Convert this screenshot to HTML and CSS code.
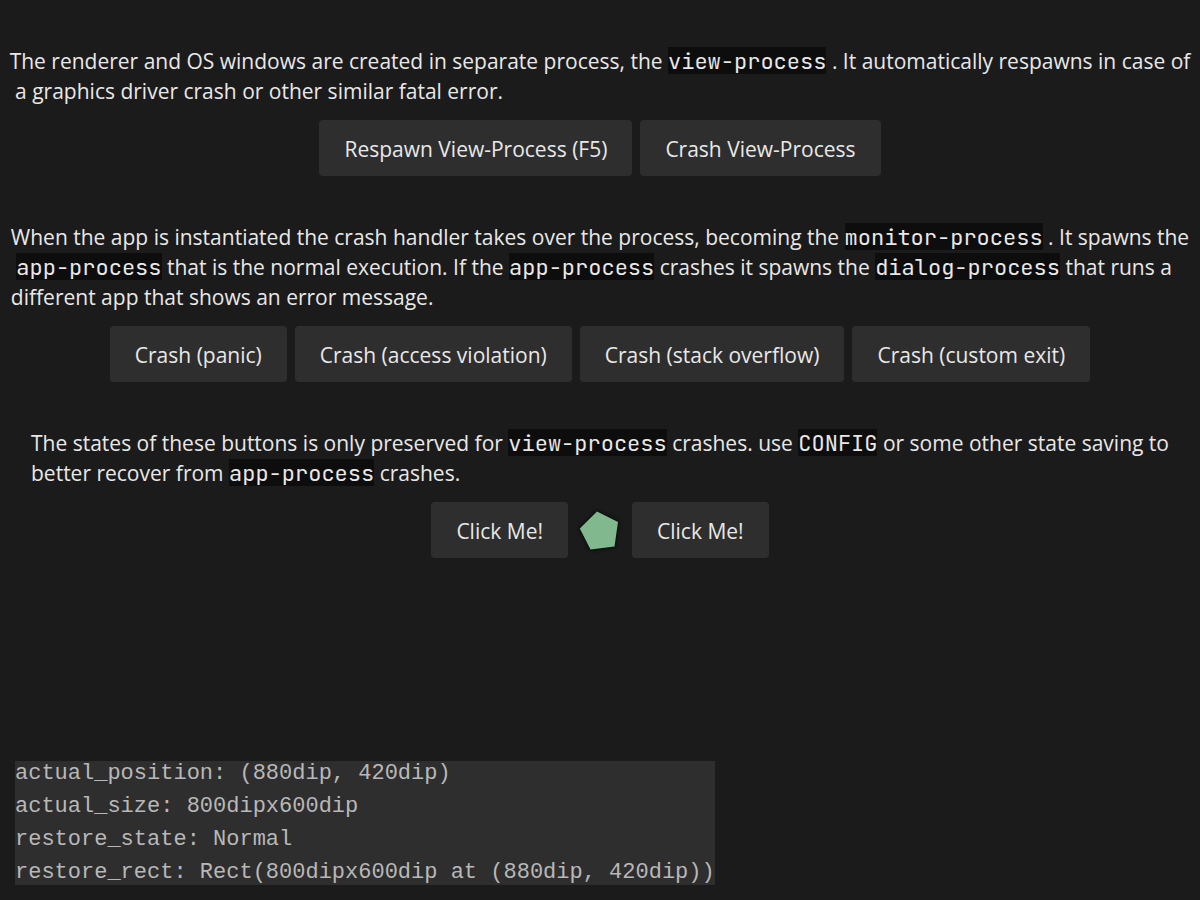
FILE: index.html
```html
<!DOCTYPE html>
<html lang="en">
<head>
<meta charset="utf-8">
<title>Respawn Example</title>
<link rel="stylesheet" href="styles.css">
</head>
<body>
<main class="content">
  <section class="group">
    <p class="text">The renderer and OS windows are created in separate process, the <code>view-process</code> . It automatically respawns in case of<br>&nbsp;a graphics driver crash or other similar fatal error.</p>
    <div class="actions">
      <button class="btn" type="button">Respawn View-Process (F5)</button>
      <button class="btn" type="button">Crash View-Process</button>
    </div>
  </section>
  <section class="group">
    <p class="text">When the app is instantiated the crash handler takes over the process, becoming the <code>monitor-process</code> . It spawns the<br>&nbsp;<code>app-process</code> that is the normal execution. If the <code>app-process</code> crashes it spawns the <code>dialog-process</code> that runs a<br>different app that shows an error message.</p>
    <div class="actions">
      <button class="btn" type="button">Crash (panic)</button>
      <button class="btn" type="button">Crash (access violation)</button>
      <button class="btn" type="button">Crash (stack overflow)</button>
      <button class="btn" type="button">Crash (custom exit)</button>
    </div>
  </section>
  <section class="group">
    <p class="text">The states of these buttons is only preserved for <code>view-process</code> crashes. use <code>CONFIG</code> or some other state saving to<br>better recover from <code>app-process</code> crashes.</p>
    <div class="actions">
      <button class="btn" type="button">Click Me!</button>
      <svg class="shape" width="48" height="48" viewBox="0 0 48 48" aria-hidden="true"><path d="M21 5.500L42 16L38.500 40.500L14.500 43.500L3.800 22.500Z"/></svg>
      <button class="btn" type="button">Click Me!</button>
    </div>
  </section>
</main>
<div class="status">
  <div>actual_position: (880dip, 420dip)</div>
  <div>actual_size: 800dipx600dip</div>
  <div>restore_state: Normal</div>
  <div>restore_rect: Rect(800dipx600dip at (880dip, 420dip))</div>
</div>
</body>
</html>
```
FILE: styles.css
```css
* { box-sizing: border-box; }

body {
  margin: 0;
  min-height: 100vh;
  padding: 46px 0 15px;
  display: flex;
  flex-direction: column;
  justify-content: space-between;
  align-items: flex-start;
  background: #1b1b1b;
  color: #e8e8e8;
  font: 21px/30px "Open Sans", "Noto Sans", sans-serif;
}

.content {
  width: 100%;
  padding: 0 4px;
  display: flex;
  flex-direction: column;
  gap: 46px;
}

.group {
  display: flex;
  flex-direction: column;
  align-items: center;
  gap: 14px;
}

.text { margin: 0; }

.text code {
  display: inline-block;
  padding-top: 2px;
  background: #0d0d0d;
  font: 22px/25px "JetBrains Mono", "DejaVu Sans Mono", monospace;
}

.actions {
  display: flex;
  flex-wrap: wrap;
  justify-content: center;
  align-items: center;
  gap: 8px;
}

.btn {
  height: 56px;
  padding: 2px 25px 0;
  border: 0;
  border-radius: 4px;
  background: #2e2e2e;
  color: inherit;
  font: inherit;
}

.shape {
  fill: #82b88d;
  filter: drop-shadow(0 0 2px #000);
}

.status {
  margin-left: 15px;
  display: flex;
  flex-direction: column;
  gap: 8px;
  background: #2e2e2e;
  color: #b8b8b8;
  font: 22px/25px "Liberation Mono", monospace;
}
```
